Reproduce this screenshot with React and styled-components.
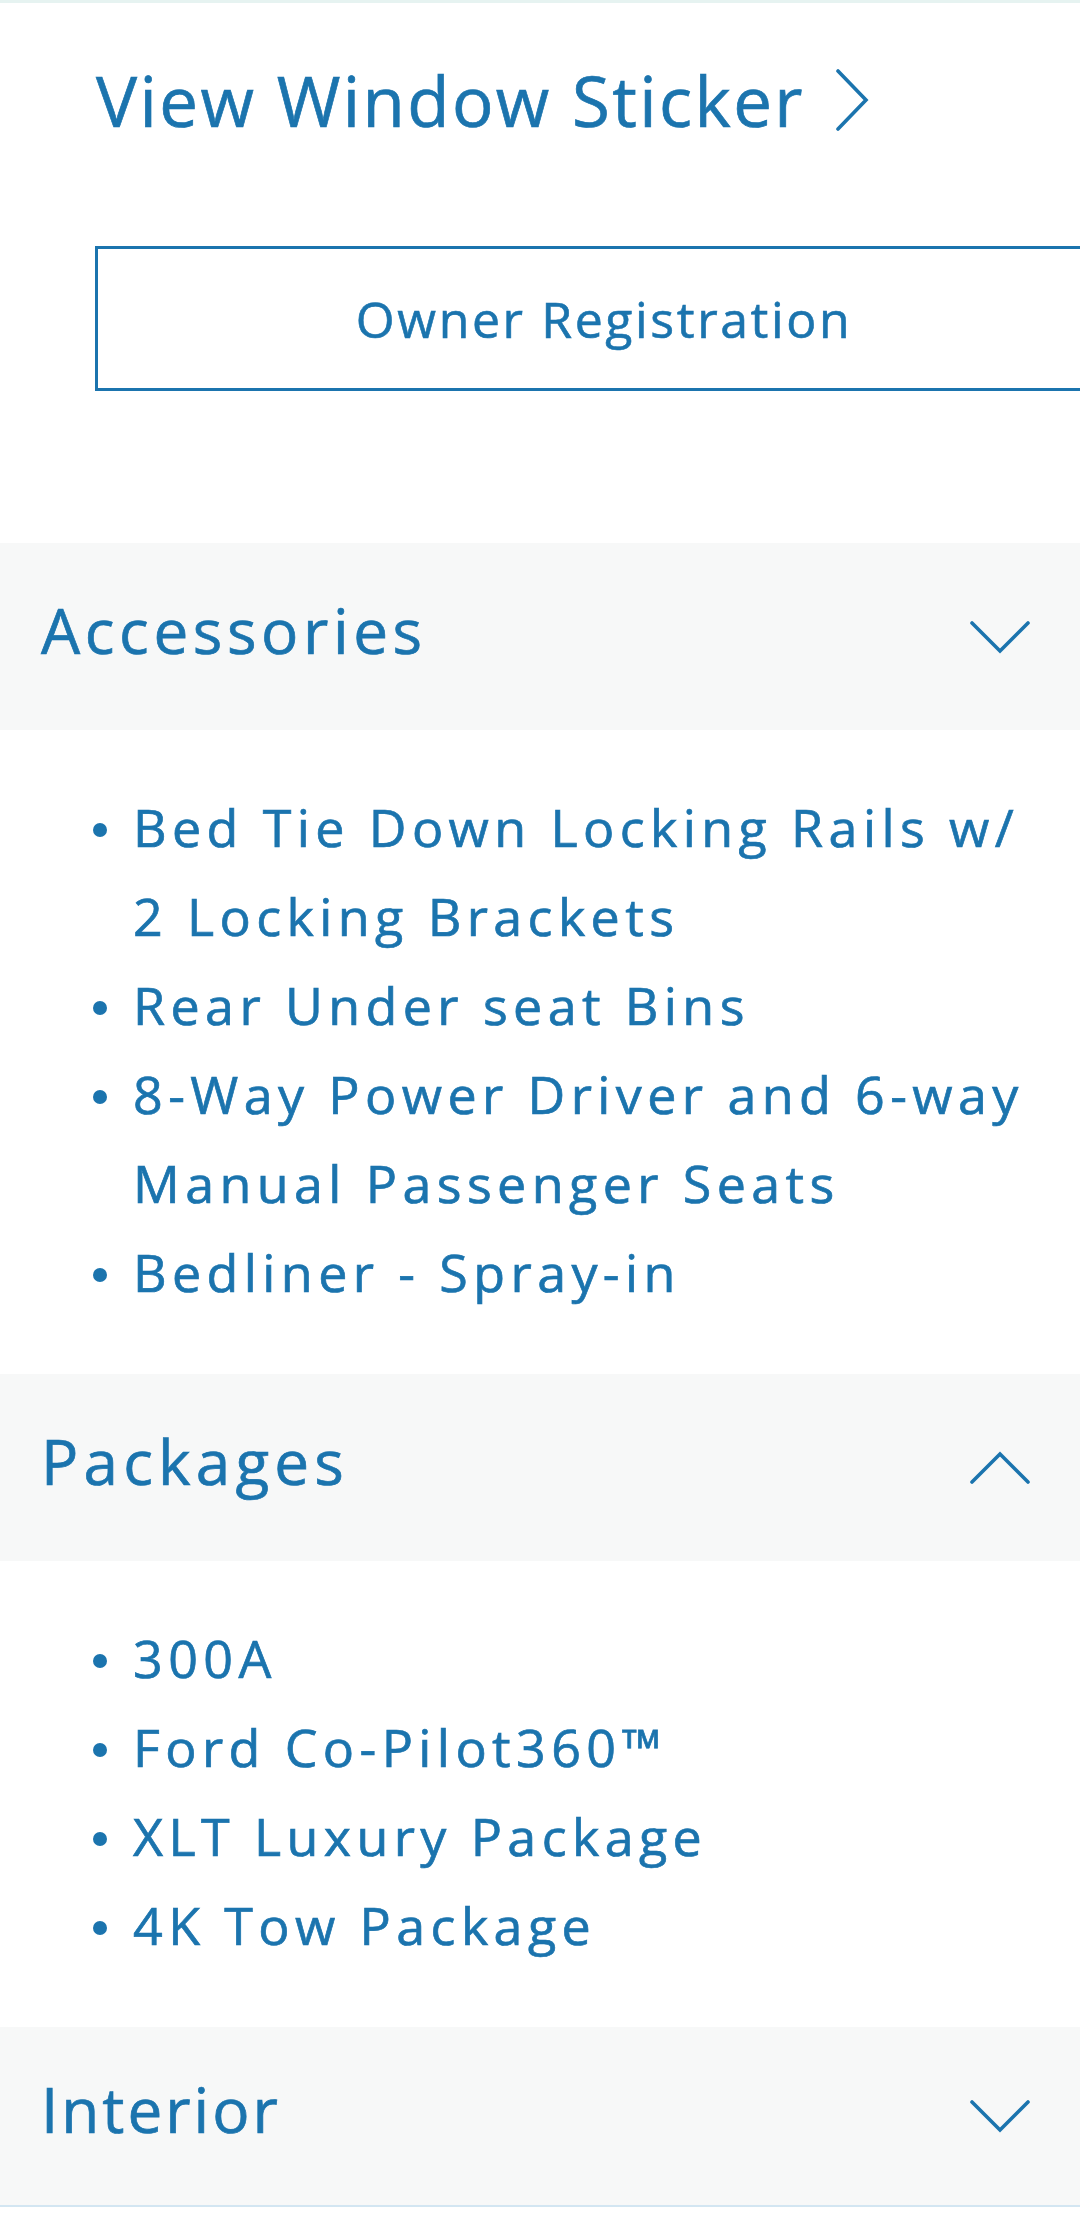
import React from "react";
import styled, { createGlobalStyle } from "styled-components";

const Global = createGlobalStyle`
  html, body { margin: 0; padding: 0; background: #ffffff; }
  body { overflow-x: hidden; font-family: "Open Sans", "Noto Sans", sans-serif; }
`;

const BLUE = "#1b74ae";
const FONT = `"Open Sans", "Noto Sans", sans-serif`;

const Page = styled.div`
  width: 1080px;
  overflow: hidden;
  border-top: 3px solid #e6f3f1;
  color: ${BLUE};
  font-family: ${FONT};
  -webkit-text-stroke: 0.7px ${BLUE};
`;

const Top = styled.div`
  padding: 49px 0 0 96px;
  height: 540px;
  box-sizing: border-box;
`;

const StickerLink = styled.a`
  display: flex;
  align-items: center;
  gap: 30px;
  font-size: 69px;
  line-height: 96px;
  letter-spacing: 2.4px;
  color: ${BLUE};
  text-decoration: none;
`;

const OwnerButton = styled.button`
  margin-top: 98px;
  margin-left: -1px;
  width: 1018px;
  height: 145px;
  box-sizing: border-box;
  border: 3px solid ${BLUE};
  background: #fff;
  color: ${BLUE};
  font-family: ${FONT};
  font-size: 50px;
  letter-spacing: 2.6px;
  -webkit-text-stroke: 0.6px ${BLUE};
  display: flex;
  align-items: center;
  justify-content: center;
  padding: 0;
`;

const Section = styled.section`
  display: flex;
  flex-direction: column;
`;

const Header = styled.div`
  height: ${p => p.$h}px;
  background: #f7f8f8;
  display: flex;
  align-items: center;
  justify-content: space-between;
  padding: 0 50px 0 41px;
  box-sizing: border-box;
  border-bottom: ${p => (p.$line ? "2px solid #d3e6f2" : "none")};
`;

const HeaderTitle = styled.h2`
  margin: 0 0 14px 0;
  font-weight: 400;
  font-size: 62px;
  letter-spacing: ${p => p.$ls}px;
  line-height: 1;
  color: ${BLUE};
`;

const List = styled.ul`
  list-style: none;
  margin: 0;
  padding: 52px 30px 58px 93px;
`;

const Item = styled.li`
  position: relative;
  padding-left: 40px;
  font-size: 52px;
  line-height: 89px;
  letter-spacing: 5.4px;
  color: ${BLUE};
  &::before {
    content: "";
    position: absolute;
    left: 0;
    top: 41px;
    width: 14px;
    height: 14px;
    border-radius: 50%;
    background: ${BLUE};
  }
`;

const Chevron = ({ dir }) => {
  if (dir === "right") {
    return (
      <svg width="34" height="62" viewBox="0 0 34 62" fill="none">
        <path d="M3 2 L31 31 L3 60" stroke={BLUE} strokeWidth="3.6" strokeLinecap="round" strokeLinejoin="miter" />
      </svg>
    );
  }
  const d = dir === "up" ? "M2 31 L30 3 L58 31" : "M2 3 L30 31 L58 3";
  return (
    <svg width="60" height="34" viewBox="0 0 60 34" fill="none">
      <path d={d} stroke={BLUE} strokeWidth="3.6" strokeLinecap="round" />
    </svg>
  );
};

const sections = [
  {
    title: "Accessories",
    ls: 4.6,
    open: true,
    dir: "down",
    items: [
      "Bed Tie Down Locking Rails w/ 2 Locking Brackets",
      "Rear Under seat Bins",
      "8-Way Power Driver and 6-way Manual Passenger Seats",
      "Bedliner - Spray-in",
    ],
  },
  {
    title: "Packages",
    ls: 5.2,
    open: true,
    dir: "up",
    items: ["300A", "Ford Co-Pilot360™", "XLT Luxury Package", "4K Tow Package"],
  },
  { title: "Interior", ls: 3, open: false, dir: "down", items: [] },
];

export default function App() {
  return (
    <Page>
      <Global />
      <Top>
        <StickerLink href="#">
          <span>View Window Sticker</span>
          <Chevron dir="right" />
        </StickerLink>
        <OwnerButton>Owner Registration</OwnerButton>
      </Top>
      {sections.map((s, i) => (
        <Section key={s.title}>
          <Header $h={i === 2 ? 180 : 187} $line={i === 2}>
            <HeaderTitle $ls={s.ls}>{s.title}</HeaderTitle>
            <Chevron dir={s.dir} />
          </Header>
          {s.open && (
            <List>
              {s.items.map(t => (
                <Item key={t}>{t}</Item>
              ))}
            </List>
          )}
        </Section>
      ))}
    </Page>
  );
}
